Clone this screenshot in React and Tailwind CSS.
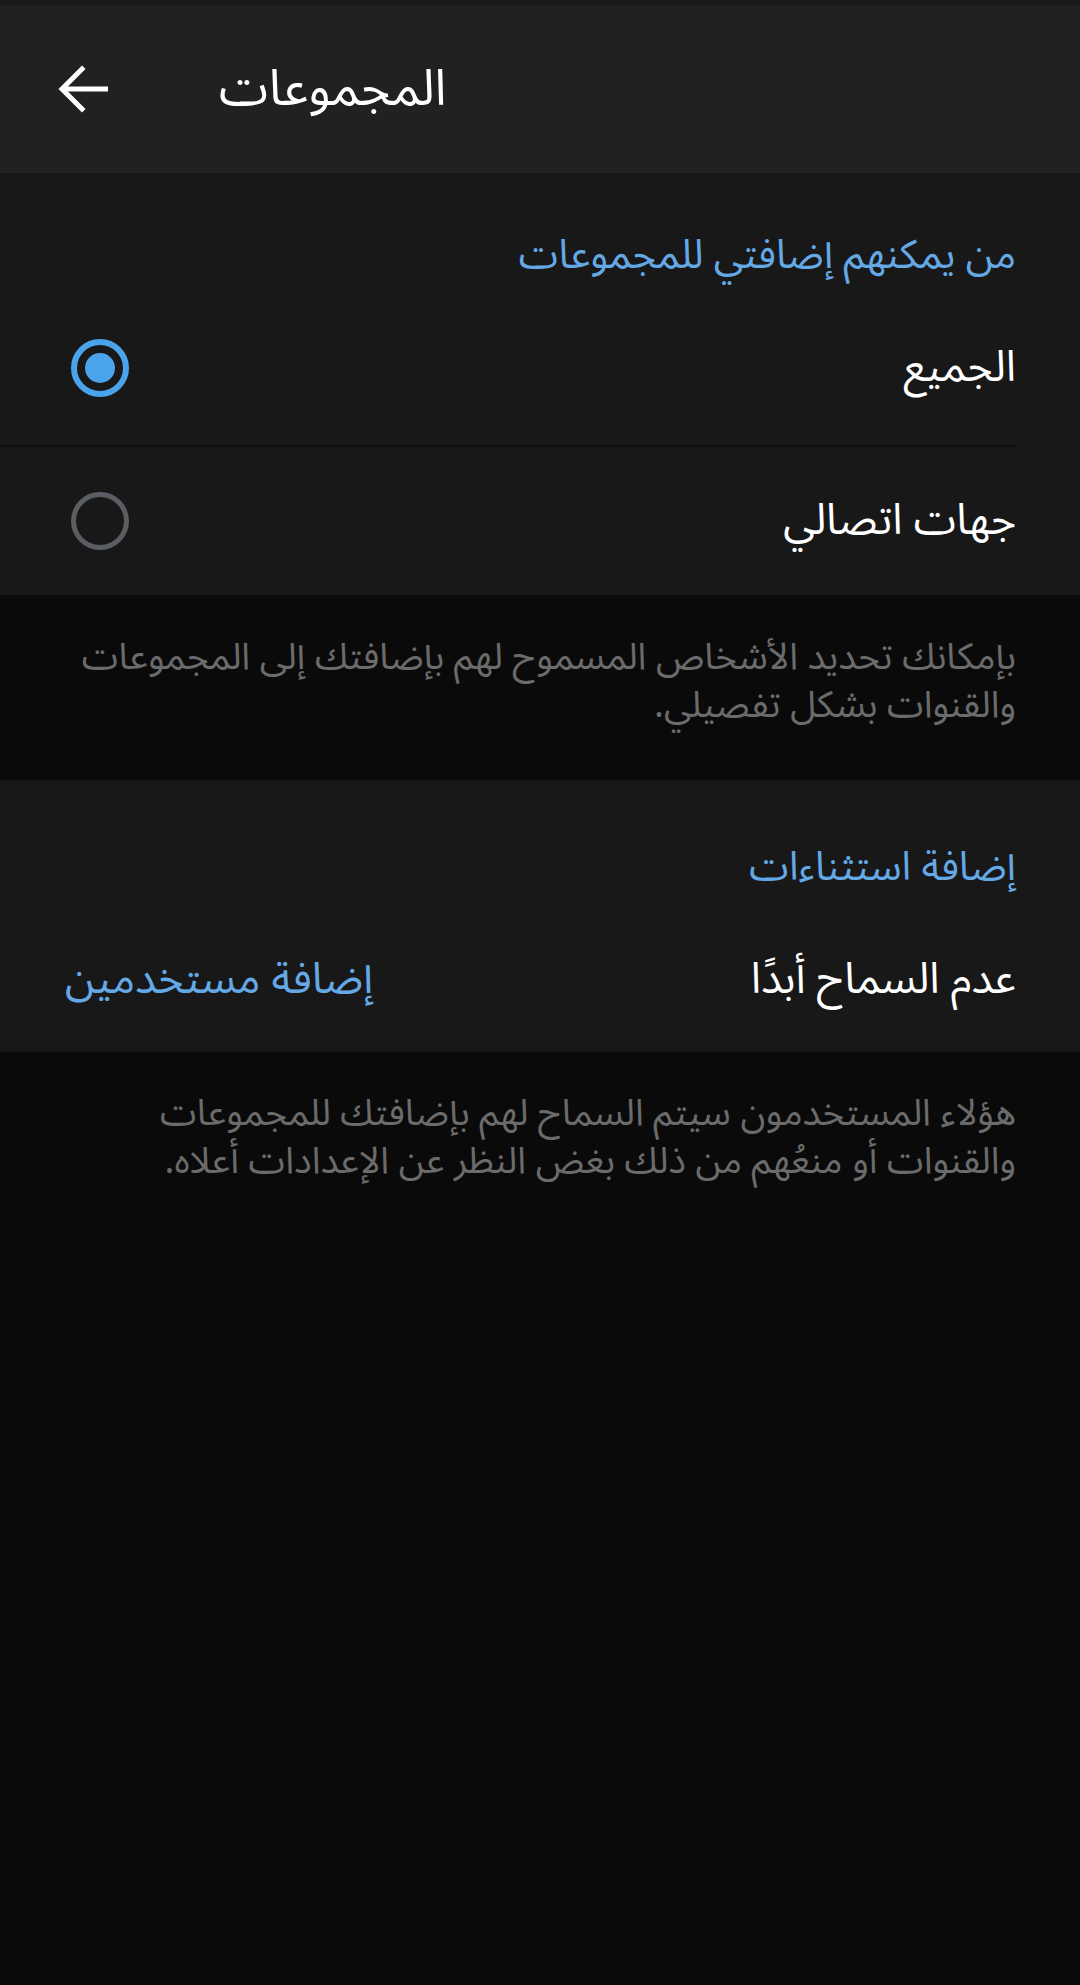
import React, { useState } from 'react';

const font = { fontFamily: '"Noto Sans Arabic", "Noto Naskh Arabic", "DejaVu Sans", sans-serif' };

function Radio({ checked }) {
  return checked ? (
    <span className="flex h-[58px] w-[58px] items-center justify-center rounded-full border-[6px] border-[#4ba3ec]">
      <span className="h-[30px] w-[30px] rounded-full bg-[#4ba3ec]" />
    </span>
  ) : (
    <span className="h-[58px] w-[58px] rounded-full border-[5px] border-[#5a5e63]" />
  );
}

function BackArrow() {
  return (
    <svg width="50" height="48" viewBox="0 0 50 48" fill="none" stroke="#ffffff" strokeWidth="5" strokeLinecap="square">
      <path d="M48 24H6" />
      <path d="M24 4L4 24L24 44" />
    </svg>
  );
}

export default function App() {
  const [who, setWho] = useState('all');

  return (
    <div className="min-h-[1985px] bg-[#0a0a0a]" style={font}>
      <div className="h-[5px] bg-[#1a1a1a]" />
      <div className="flex h-[168px] items-center bg-[#212121] pl-[58px]">
        <BackArrow />
        <h1 className="ml-[111px] text-[50px] leading-none text-white">المجموعات</h1>
      </div>

      <div dir="rtl" className="bg-[#181818]">
        <div className="h-[118px] pr-[64px] pt-[60px] text-[40px] leading-[46px] text-[#64a9e6]">من يمكنهم إضافتي للمجموعات</div>
        <button
          onClick={() => setWho('all')}
          className="mr-[64px] flex h-[156px] w-[1016px] items-center justify-between border-b-2 border-[#0e0e0e] pl-[71px]"
        >
          <span className="text-[43px] text-white">الجميع</span>
          <Radio checked={who === 'all'} />
        </button>
        <button
          onClick={() => setWho('contacts')}
          className="flex h-[148px] w-full items-center justify-between pr-[64px] pl-[71px]"
        >
          <span className="text-[43px] text-white">جهات اتصالي</span>
          <Radio checked={who === 'contacts'} />
        </button>
      </div>

      <div dir="rtl" className="h-[185px] pr-[64px] pl-[40px] pt-[38px] text-[37px] leading-[48px] text-[#6b6b6b]">
        بإمكانك تحديد الأشخاص المسموح لهم بإضافتك إلى المجموعات والقنوات بشكل تفصيلي.
      </div>

      <div dir="rtl" className="bg-[#181818]">
        <div className="h-[128px] pr-[64px] pt-[65px] text-[40px] leading-[46px] text-[#64a9e6]">إضافة استثناءات</div>
        <div className="flex h-[144px] items-center justify-between pr-[64px] pl-[65px]">
          <span className="text-[43px] text-white">عدم السماح أبدًا</span>
          <span className="text-[43px] text-[#64a9e6]">إضافة مستخدمين</span>
        </div>
      </div>

      <div dir="rtl" className="pr-[64px] pl-[100px] pt-[37px] text-[37px] leading-[48px] text-[#6b6b6b]">
        هؤلاء المستخدمون سيتم السماح لهم بإضافتك للمجموعات والقنوات أو منعُهم من ذلك بغض النظر عن الإعدادات أعلاه.
      </div>
    </div>
  );
}
